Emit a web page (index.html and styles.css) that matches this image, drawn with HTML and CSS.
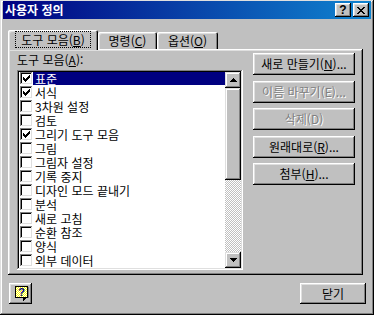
FILE: index.html
```html
<!DOCTYPE html>
<html lang="ko">
<head>
    <meta charset="UTF-8">
    <title>사용자 정의</title>
    <link rel="stylesheet" href="styles.css">
</head>
<body>
<div class="win">
    <div class="titlebar">
        <span class="title">사용자 정의</span>
        <div class="tbtns">
            <span class="tbtn qm">?</span>
            <span class="tbtn">
                <svg width="8" height="7" viewBox="0 0 8 7" shape-rendering="crispEdges"><path d="M0 0h2v1H0zM6 0h2v1H6zM1 1h2v1H1zM5 1h2v1H5zM2 2h4v1H2zM3 3h2v1H3zM2 4h4v1H2zM1 5h2v1H1zM5 5h2v1H5zM0 6h2v1H0zM6 6h2v1H6z" fill="#000"/></svg>
            </span>
        </div>
    </div>

    <div class="tabs">
        <div class="tab sel w1"><span class="focus">도구 모음(<u>B</u>)</span></div>
        <div class="tab w2">명령(<u>C</u>)</div>
        <div class="tab w3">옵션(<u>O</u>)</div>
    </div>

    <div class="panel">
        <div class="leftcol">
            <div class="lbl">도구 모음(<u>A</u>):</div>
            <div class="list">
                <ul class="items">
                    <li class="row cur"><span class="cb on"></span><span class="txt">표준</span></li>
                    <li class="row"><span class="cb on"></span><span class="txt">서식</span></li>
                    <li class="row"><span class="cb"></span><span class="txt">3차원 설정</span></li>
                    <li class="row"><span class="cb"></span><span class="txt">검토</span></li>
                    <li class="row"><span class="cb on"></span><span class="txt">그리기 도구 모음</span></li>
                    <li class="row"><span class="cb"></span><span class="txt">그림</span></li>
                    <li class="row"><span class="cb"></span><span class="txt">그림자 설정</span></li>
                    <li class="row"><span class="cb"></span><span class="txt">기록 중지</span></li>
                    <li class="row"><span class="cb"></span><span class="txt">디자인 모드 끝내기</span></li>
                    <li class="row"><span class="cb"></span><span class="txt">분석</span></li>
                    <li class="row"><span class="cb"></span><span class="txt">새로 고침</span></li>
                    <li class="row"><span class="cb"></span><span class="txt">순환 참조</span></li>
                    <li class="row"><span class="cb"></span><span class="txt">양식</span></li>
                    <li class="row"><span class="cb"></span><span class="txt">외부 데이터</span></li>
                </ul>
                <div class="vscroll">
                    <div class="sbtn">
                        <svg width="7" height="4" viewBox="0 0 7 4" shape-rendering="crispEdges"><path d="M3 0h1v1h1v1h1v1h1v1H0V3h1V2h1V1h1z" fill="#000"/></svg>
                    </div>
                    <div class="thumb"></div>
                    <div class="track"></div>
                    <div class="sbtn">
                        <svg width="7" height="4" viewBox="0 0 7 4" shape-rendering="crispEdges"><path d="M0 0h7v1H6v1H5v1H4v1H3V3H2V2H1V1H0z" fill="#000"/></svg>
                    </div>
                </div>
            </div>
        </div>
        <div class="btncol">
            <div class="btn">새로 만들기(<u>N</u>)...</div>
            <div class="btn dis">이름 바꾸기(E)...</div>
            <div class="btn dis">삭제(D)</div>
            <div class="btn">원래대로(<u>R</u>)...</div>
            <div class="btn">첨부(<u>H</u>)...</div>
        </div>
    </div>

    <div class="foot">
        <div class="btn help">
            <svg width="14" height="16" viewBox="0 0 14 16" shape-rendering="crispEdges">
                <defs>
                    <pattern id="dots" width="2" height="2" patternUnits="userSpaceOnUse">
                        <rect width="2" height="2" fill="#fff"/>
                        <rect width="1" height="1" fill="#ffff00"/>
                        <rect x="1" y="1" width="1" height="1" fill="#ffff00"/>
                    </pattern>
                </defs>
                <rect x="0.5" y="0.5" width="12" height="11" fill="url(#dots)" stroke="#000"/>
                <path d="M7 12h4v1h-1v1h-1v1H8v-3z" fill="#000"/>
                <rect x="13" y="1" width="1" height="11" fill="#808080"/>
                <text x="6.5" y="10" text-anchor="middle" class="q">?</text>
            </svg>
        </div>
        <div class="btn close">닫기</div>
    </div>
</div>
</body>
</html>
```

FILE: styles.css
```css
*{
    box-sizing: border-box;
}
body{
    margin: 0;
    background: #c0c0c0;
    font-family: "Noto Sans CJK KR", "Noto Sans", sans-serif;
    font-size: 12px;
    color: #000;
}
u{
    text-underline-offset: 1px;
}
.win{
    width: 374px;
    height: 315px;
    padding: 1px 3px 3px 3px;
    background: #c0c0c0;
    box-shadow: inset -1px -1px #000, inset 1px 1px #dfdfdf, inset -2px -2px #808080, inset 2px 2px #fff;
}
.titlebar{
    height: 18px;
    display: flex;
    align-items: center;
    justify-content: space-between;
    padding: 0 2px 0 2px;
    background: linear-gradient(to right, #000080, #1084d0);
}
.title{
    color: #fff;
    font-weight: bold;
    line-height: 18px;
}
.tbtns{
    display: flex;
    gap: 2px;
}
.tbtn{
    width: 16px;
    height: 14px;
    display: flex;
    align-items: center;
    justify-content: center;
    background: #c0c0c0;
    box-shadow: inset -1px -1px #000, inset 1px 1px #fff, inset -2px -2px #808080, inset 2px 2px #dfdfdf;
}
.qm{
    font-family: "Liberation Sans", sans-serif;
    font-weight: bold;
    font-size: 12px;
    line-height: 14px;
    padding-bottom: 1px;
}

/* tabs */
.tabs{
    height: 19px;
    margin-top: 11px;
    padding-left: 5px;
    display: flex;
    align-items: flex-end;
}
.tab{
    height: 17px;
    display: flex;
    align-items: center;
    justify-content: center;
    line-height: 14px;
    border-top-left-radius: 2px;
    border-top-right-radius: 2px;
    background: #c0c0c0;
    box-shadow: inset 1px 1px #fff, inset -1px 0 #000, inset -2px 0 #808080, inset 2px 2px #dfdfdf;
}
.tab.sel{
    height: 20px;
    margin-bottom: -1px;
    position: relative;
    z-index: 1;
    padding-bottom: 2px;
}
.w1{ width: 90px; }
.w2{ width: 59px; }
.w3{ width: 61px; }
.focus{
    outline: 1px dotted #000;
    padding: 0 5px;
    line-height: 15px;
}

/* panel */
.panel{
    width: 355px;
    height: 226px;
    margin-left: 5px;
    padding: 4px 0 0 9px;
    display: flex;
    gap: 10px;
    box-shadow: inset -1px -1px #000, inset 1px 1px #fff, inset -2px -2px #808080, inset 2px 2px #dfdfdf;
}
.leftcol{
    width: 226px;
}
.lbl{
    line-height: 14px;
    margin-bottom: 3px;
}
.list{
    height: 200px;
    padding: 2px;
    display: flex;
    background: #fff;
    box-shadow: inset -1px -1px #fff, inset 1px 1px #808080, inset -2px -2px #dfdfdf, inset 2px 2px #000;
}
.items{
    flex: 1;
    margin: 0;
    padding: 0;
    list-style: none;
}
.row{
    height: 14px;
    display: flex;
    align-items: flex-start;
    padding-left: 1px;
}
.cb{
    width: 13px;
    height: 13px;
    flex: none;
    background: #fff;
    box-shadow: inset -1px -1px #fff, inset 1px 1px #808080, inset -2px -2px #dfdfdf, inset 2px 2px #000;
}
.cb.on{
    background: #fff url("data:image/svg+xml,%3Csvg xmlns='http://www.w3.org/2000/svg' width='13' height='13' shape-rendering='crispEdges'%3E%3Cpath d='M3 5h1v3H3zM4 6h1v3H4zM5 7h1v3H5zM6 6h1v3H6zM7 5h1v3H7zM8 4h1v3H8zM9 3h1v3H9z' fill='%23000'/%3E%3C/svg%3E") no-repeat;
}
.txt{
    flex: 1;
    height: 13px;
    line-height: 13px;
    padding-left: 2px;
    white-space: nowrap;
}
.cur .txt{
    background: #000080;
    color: #fff;
}
.vscroll{
    width: 16px;
    display: flex;
    flex-direction: column;
}
.sbtn{
    height: 16px;
    display: flex;
    align-items: center;
    justify-content: center;
    background: #c0c0c0;
    box-shadow: inset -1px -1px #000, inset 1px 1px #dfdfdf, inset -2px -2px #808080, inset 2px 2px #fff;
}
.thumb{
    height: 92px;
    background: #c0c0c0;
    box-shadow: inset -1px -1px #000, inset 1px 1px #dfdfdf, inset -2px -2px #808080, inset 2px 2px #fff;
}
.track{
    flex: 1;
    background: repeating-conic-gradient(#fff 0 25%, #c0c0c0 0 50%) 0 0/2px 2px;
}

/* buttons */
.btncol{
    width: 102px;
    display: flex;
    flex-direction: column;
    gap: 5.5px;
}
.btn{
    height: 22px;
    display: flex;
    align-items: center;
    justify-content: center;
    line-height: 14px;
    white-space: nowrap;
    background: #c0c0c0;
    box-shadow: inset -1px -1px #000, inset 1px 1px #fff, inset -2px -2px #808080, inset 2px 2px #dfdfdf;
}
.btn.dis{
    color: #808080;
    text-shadow: 1px 1px #fff;
}
.foot{
    margin-top: 8px;
    padding: 0 5px 0 6px;
    display: flex;
    justify-content: space-between;
}
.help{
    width: 23px;
    height: 21px;
    padding: 1px 0 0 2px;
}
.close{
    width: 66px;
    height: 21px;
}
.q{
    font-family: "Liberation Sans", sans-serif;
    font-weight: bold;
    font-size: 11px;
    fill: #000080;
}
```
